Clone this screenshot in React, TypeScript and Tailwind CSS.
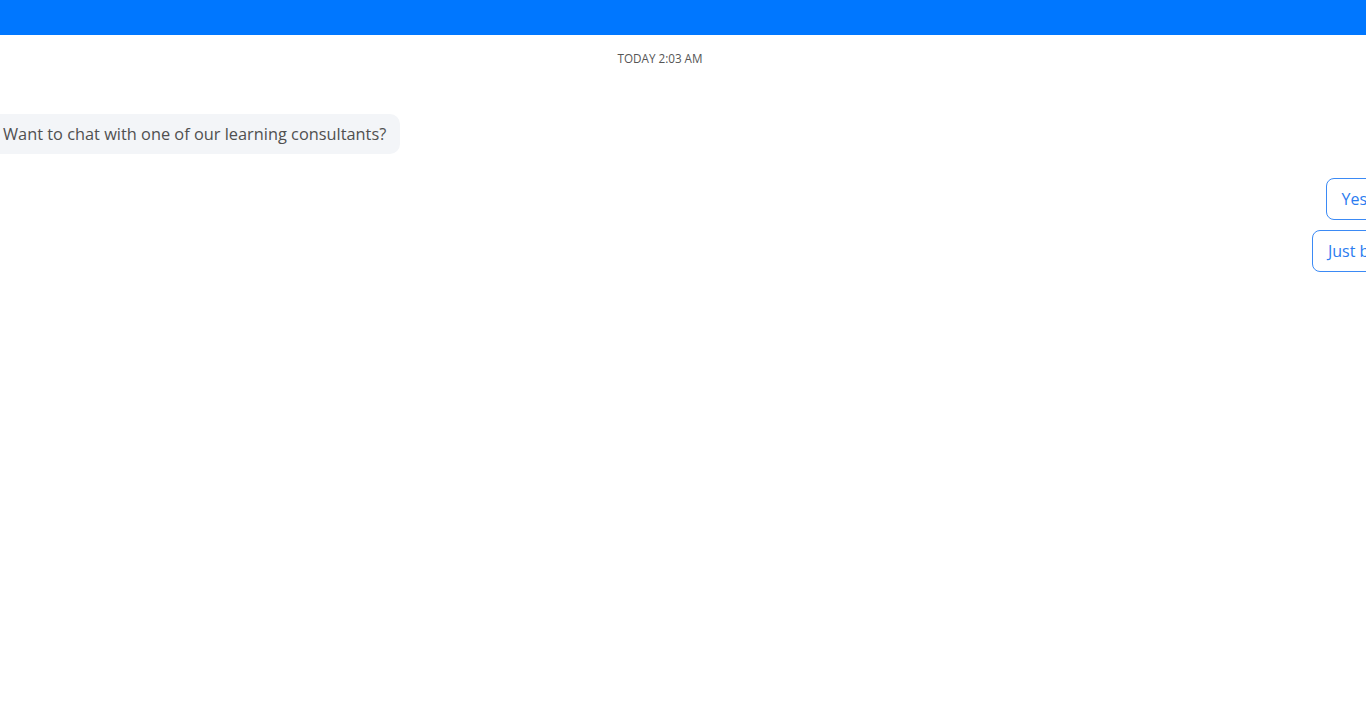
const App = () => {
  const replies = ["Yes, please!", "Just browsing"];

  return (
    <div className="w-[1366px] h-[720px] overflow-hidden bg-white font-['Open_Sans',sans-serif]">
      <header className="h-[35px] bg-[#0077ff]" />
      <div className="flex flex-col">
        <div className="flex justify-center pr-[46px] mt-[16px]">
          <span className="text-[11.7px] leading-[15px] text-[#555]">TODAY 2:03 AM</span>
        </div>
        <div className="mt-[48px] ml-[-12px]">
          <div className="inline-block rounded-[10px] bg-[#f3f5f8] pl-[15px] pr-[14px] py-[9px] text-[16.35px] leading-[22px] text-[#505050]">
            Want to chat with one of our learning consultants?
          </div>
        </div>
        <div className="mt-[24px] mr-[-78px] flex flex-col items-end gap-[10px]">
          {replies.map((r) => (
            <button
              key={r}
              className="whitespace-nowrap rounded-[8px] border border-[#3b8af5] bg-white px-[15px] py-[9px] text-[16px] leading-[22px] text-[#2b7cf0]"
            >
              {r}
            </button>
          ))}
        </div>
      </div>
    </div>
  );
};

export default App;
